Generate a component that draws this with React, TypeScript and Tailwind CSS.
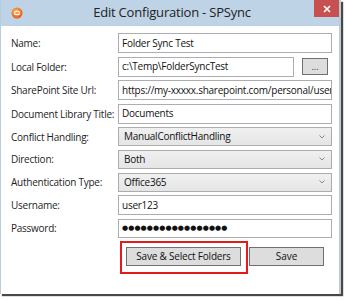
import React from 'react';

const font = { fontFamily: '"Open Sans", "Noto Sans", sans-serif' };

function Label({ text }: { text: string }) {
    return <div className="w-[107px] shrink-0 whitespace-nowrap text-[10px] tracking-[-0.25px] text-[#1e1e1e] leading-none">{text}</div>;
}

function TextBox({ value, className = 'w-[214px]' }: { value: string; className?: string }) {
    return (
        <div className={`${className} h-[20px] border border-[#abadb3] bg-white flex items-center pl-[3px] overflow-hidden whitespace-nowrap text-[10px] tracking-[-0.25px] text-[#111]`}>
            {value}
        </div>
    );
}

function Select({ value }: { value: string }) {
    return (
        <div className="w-[214px] h-[19px] border border-[#acacac] bg-gradient-to-b from-[#f0f0f0] to-[#e5e5e5] flex items-center justify-between pl-[5px] pr-[6px] text-[10px] tracking-[-0.25px] text-[#111]">
            <span>{value}</span>
            <svg width="6" height="4" viewBox="0 0 6 4">
                <path d="M0.5 0.5 L3 3 L5.5 0.5" fill="none" stroke="#888" strokeWidth="1" />
            </svg>
        </div>
    );
}

export default function App() {
    return (
        <div className="w-[346px] h-[300px] bg-white relative overflow-hidden" style={font}>
            {/* Window */}
            <div className="w-[341px] h-[294px] flex flex-col bg-white border-l border-[#b9cde0] border-r-2 border-r-[#bccbd9] shadow-[2px_2px_1px_rgba(40,40,40,0.85)]">
                {/* Title bar */}
                <div className="h-[26px] shrink-0 bg-[#bfd3e6] relative flex items-center justify-center">
                    <svg className="absolute left-[10px] top-[7px]" width="12" height="12" viewBox="0 0 12 12">
                        <defs>
                            <radialGradient id="g" cx="0.4" cy="0.35" r="0.7">
                                <stop offset="0" stopColor="#ffb347" />
                                <stop offset="1" stopColor="#e8501c" />
                            </radialGradient>
                        </defs>
                        <circle cx="6" cy="6" r="5.5" fill="url(#g)" />
                        <path d="M3 5.5 Q6 3 9 5.5 M3 6.5 Q6 9 9 6.5" fill="none" stroke="#fff" strokeWidth="1.2" />
                    </svg>
                    <span className="text-[13px] tracking-[-0.2px] text-[#222] pl-[4px]">Edit Configuration - SPSync</span>
                    <div className="absolute right-0 top-0 w-[25px] h-[17px] bg-[#c75050] flex items-center justify-center">
                        <svg width="8" height="8" viewBox="0 0 8 8">
                            <path d="M1 1 L7 7 M7 1 L1 7" stroke="#fff" strokeWidth="1.6" />
                        </svg>
                    </div>
                </div>

                {/* Form */}
                <div className="flex flex-col gap-[3.6px] pl-[10px] pt-[7px]">
                    <div className="flex items-center"><Label text="Name:" /><TextBox value="Folder Sync Test" /></div>
                    <div className="flex items-center">
                        <Label text="Local Folder:" />
                        <TextBox value="c:\Temp\FolderSyncTest" className="w-[176px]" />
                        <div className="ml-[8px] w-[26px] h-[17px] border border-[#707070] bg-[#dddddd] flex items-center justify-center text-[9px] leading-none text-[#333]">...</div>
                    </div>
                    <div className="flex items-center"><Label text="SharePoint Site Url:" /><TextBox value="https://my-xxxxx.sharepoint.com/personal/user_" /></div>
                    <div className="flex items-center"><Label text="Document Library Title:" /><TextBox value="Documents" /></div>
                    <div className="flex items-center"><Label text="Conflict Handling:" /><Select value="ManualConflictHandling" /></div>
                    <div className="flex items-center"><Label text="Direction:" /><Select value="Both" /></div>
                    <div className="flex items-center"><Label text="Authentication Type:" /><Select value="Office365" /></div>
                    <div className="flex items-center"><Label text="Username:" /><TextBox value="user123" /></div>
                    <div className="flex items-center">
                        <Label text="Password:" />
                        <div className="w-[214px] h-[19px] border border-[#abadb3] bg-white flex items-center pl-[3px] text-[7px] tracking-[0.1px] text-[#111]" style={{ fontFamily: '"DejaVu Sans", sans-serif' }}>
                            ●●●●●●●●●●●●●●●●●
                        </div>
                    </div>
                </div>

                {/* Buttons */}
                <div className="flex items-start pl-[119px] mt-[3px]">
                    <div className="w-[128px] h-[33px] border-2 border-[#e41b1b] pl-[4px] pt-[4px]">
                        <div className="w-[115px] h-[19px] border border-[#707070] bg-[#dddddd] flex items-center justify-center text-[10px] tracking-[-0.2px] text-[#111]">Save &amp; Select Folders</div>
                    </div>
                    <div className="ml-[1px] mt-[6px] w-[75px] h-[19px] border border-[#707070] bg-[#dddddd] flex items-center justify-center text-[10px] text-[#111]">Save</div>
                </div>
            </div>
        </div>
    );
}
